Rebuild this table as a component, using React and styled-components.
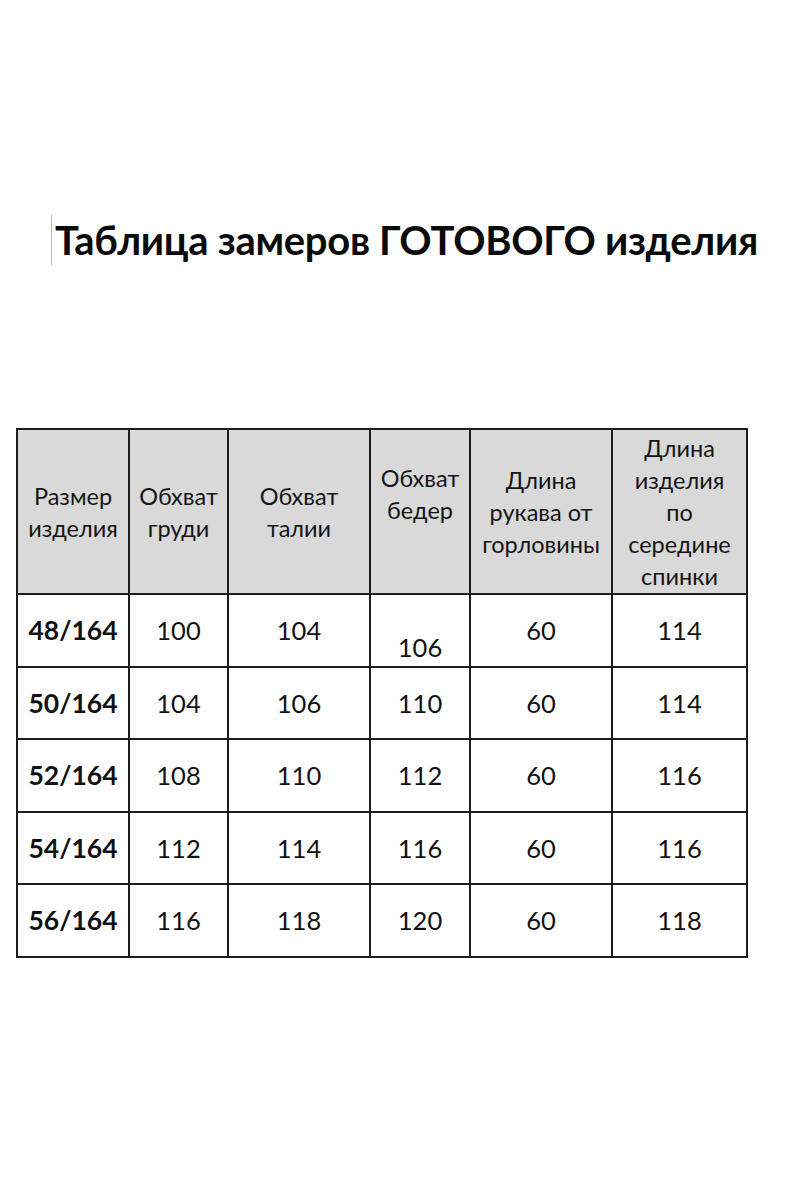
import React from "react";
import styled, { createGlobalStyle } from "styled-components";

const GlobalStyle = createGlobalStyle`
  html, body {
    margin: 0;
    padding: 0;
    background: #ffffff;
  }
  body {
    font-family: "Lato", "Open Sans", "Liberation Sans", sans-serif;
    color: #111111;
  }
`;

const Page = styled.div`
  width: 800px;
  height: 1200px;
  box-sizing: border-box;
  padding-top: 214px;
  display: flex;
  flex-direction: column;
  align-items: flex-start;
`;

const TitleRow = styled.div`
  display: flex;
  align-items: center;
  padding-left: 51px;
  height: 52px;
`;

const Caret = styled.span`
  width: 1px;
  height: 50px;
  background: #b8b8b8;
  margin-right: 3px;
`;

const Title = styled.h1`
  margin: 0;
  font-family: "Lato", "Open Sans", sans-serif;
  font-weight: 700;
  font-size: 40px;
  letter-spacing: -0.3px;
  color: #0a0a0a;
  white-space: nowrap;
`;

const Table = styled.table`
  margin-top: 162px;
  margin-left: 16px;
  border-collapse: collapse;
  table-layout: fixed;
  width: 732px;
`;

const HeadRow = styled.tr`
  height: 165px;
`;

const HeadCell = styled.th`
  background: #d9d9d9;
  border: 2px solid #1c1c1c;
  font-weight: 400;
  font-size: 23.5px;
  line-height: 32px;
  text-align: center;
  vertical-align: ${(p) => (p.$top ? "top" : "middle")};
  padding: ${(p) => (p.$top ? "32px 0 0" : "0")};
  color: #151515;
  white-space: nowrap;
`;

const BodyRow = styled.tr`
  height: 72.5px;
`;

const Cell = styled.td`
  border: 2px solid #1c1c1c;
  text-align: center;
  vertical-align: ${(p) => (p.$low ? "bottom" : "middle")};
  padding: 0 0 ${(p) => (p.$low ? "4px" : "0")} 0;
  font-size: ${(p) => (p.$bold ? "26.5px" : "25.5px")};
  font-weight: ${(p) => (p.$bold ? 700 : 400)};
  color: #111111;
`;

const columns = [
  { w: 112, label: ["Размер", "изделия"] },
  { w: 99, label: ["Обхват", "груди"] },
  { w: 142, label: ["Обхват", "талии"] },
  { w: 100, label: ["Обхват", "бедер"], top: true },
  { w: 142, label: ["Длина", "рукава от", "горловины"] },
  { w: 135, label: ["Длина", "изделия", "по", "середине", "спинки"] },
];

const rows = [
  ["48/164", "100", "104", "106", "60", "114"],
  ["50/164", "104", "106", "110", "60", "114"],
  ["52/164", "108", "110", "112", "60", "116"],
  ["54/164", "112", "114", "116", "60", "116"],
  ["56/164", "116", "118", "120", "60", "118"],
];

const App = () => (
  <>
    <GlobalStyle />
    <Page>
      <TitleRow>
        <Caret />
        <Title>Таблица замеров ГОТОВОГО изделия</Title>
      </TitleRow>
      <Table>
        <colgroup>
          {columns.map((c, i) => (
            <col key={i} style={{ width: c.w }} />
          ))}
        </colgroup>
        <thead>
          <HeadRow>
            {columns.map((c, i) => (
              <HeadCell key={i} $top={c.top}>
                {c.label.map((l, j) => (
                  <div key={j}>{l}</div>
                ))}
              </HeadCell>
            ))}
          </HeadRow>
        </thead>
        <tbody>
          {rows.map((r, ri) => (
            <BodyRow key={ri}>
              {r.map((v, ci) => (
                <Cell key={ci} $bold={ci === 0} $low={ri === 0 && ci === 3}>
                  {v}
                </Cell>
              ))}
            </BodyRow>
          ))}
        </tbody>
      </Table>
    </Page>
  </>
);

export default App;
